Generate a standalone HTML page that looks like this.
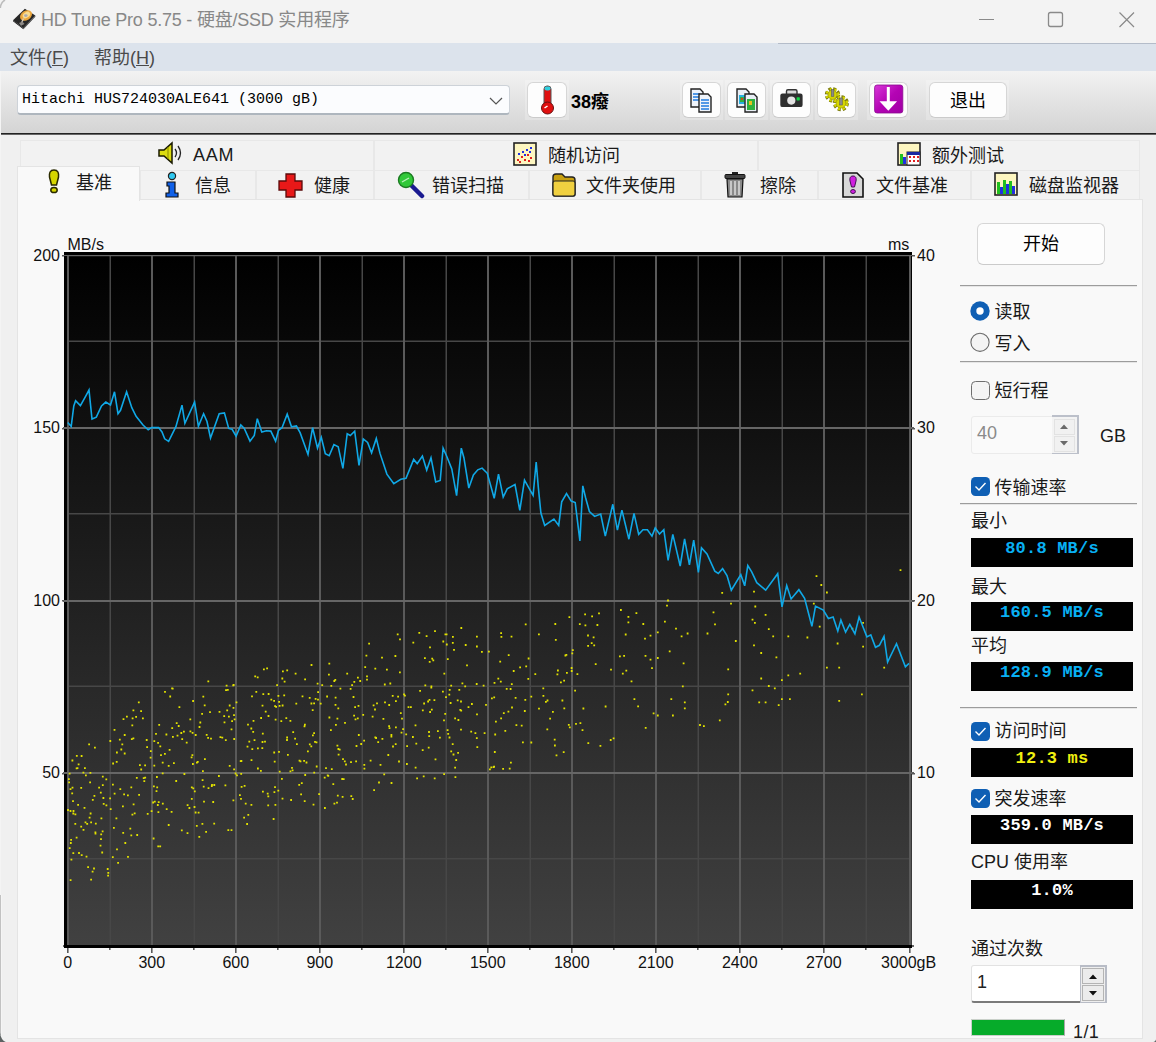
<!DOCTYPE html>
<html lang="zh"><head><meta charset="utf-8"><title>HD Tune Pro</title><style>
html,body{margin:0;padding:0}
body{width:1156px;height:1042px;position:relative;overflow:hidden;background:#f0f0f0;
 font-family:"Liberation Sans","Noto Sans CJK SC",sans-serif;font-size:18px;color:#000;line-height:1}
div,span,svg{position:absolute;box-sizing:border-box}
.t{white-space:nowrap;line-height:20px;height:20px}
.lbl{white-space:nowrap;font-size:18px;line-height:22px;height:22px;color:#1a1a1a}

.ax{white-space:nowrap;font-size:16px;line-height:16px;height:16px;color:#111;font-family:"Liberation Sans",sans-serif}
.btn{background:#fdfdfd;border:1px solid #d6d6d6;border-bottom-color:#cbcbcb;border-radius:6px}
.bb{background:#000;left:971px;width:162px;height:29px}
.bb span{left:0;width:162px;text-align:center;top:2px;font-family:"Liberation Mono","Noto Sans CJK SC",monospace;font-weight:bold;font-size:17px;line-height:18px;height:18px;white-space:nowrap;letter-spacing:0.2px}
.sep{left:960px;width:177px;height:2px;border-top:1px solid #9c9c9c;border-bottom:1px solid #e6e6e6}
.cb{width:20px;height:20px;left:970px;border-radius:4.5px;margin-top:-0.5px}
.cb.on{background:#0f5fb4}
.cb.off{background:#f4f4f4;border:1px solid #6e6e6e}
.tab{top:170px;height:30px;border:1px solid #e8e8e8;border-bottom:none;background:#f2f2f2}
.tab1{top:140px;height:30px;border:1px solid #e8e8e8;border-bottom:none;background:#f2f2f2}
.mono{font-family:"Liberation Mono","Noto Sans CJK SC",monospace}
.tt{white-space:nowrap;font-size:18px;line-height:22px;height:22px;color:#1a1a1a}
</style></head><body>
<div style="left:0px;top:0px;width:1156px;height:43px;background:#f3f3f3"></div>
<svg style="left:11px;top:7px" width="26" height="24" viewBox="0 0 26 24">
<polygon points="2,13.200 13.900,1.800 24.300,8.600 12.400,21.200" fill="#272727"/>
<polygon points="2,13.200 12.400,21.200 12.400,22.300 2,14.300" fill="#101010"/>
<polygon points="12.400,21.200 24.300,8.600 24.300,9.700 12.400,22.300" fill="#3c3c3c"/>
<ellipse cx="15" cy="8.500" rx="6.500" ry="4.700" fill="#eaa53c" transform="rotate(-33 15 8.500)"/>
<ellipse cx="15.400" cy="8" rx="4" ry="2.800" fill="#f9dc90" transform="rotate(-33 15.400 8)"/>
<ellipse cx="14.800" cy="8.600" rx="1.800" ry="1.400" fill="#a9a9b2"/>
<path d="M12.500 11.500 L10.500 16" stroke="#d8d0c4" stroke-width="1.300"/>
<polygon points="8,16 11.500,14.500 13.500,17 10,18.800" fill="#8e8a86"/>
</svg>
<svg style="left:0;top:0" width="8" height="10" viewBox="0 0 8 10"><path d="M0.300 8 Q0.600 2.500 5 0" stroke="#bcbcbc" stroke-width="1.600" fill="none"/></svg>
<span class="t" style="left:41px;top:9px;font-size:18px;color:#888;line-height:22px;height:22px;letter-spacing:-0.22px">HD Tune Pro 5.75 - 硬盘/SSD 实用程序</span>
<svg style="left:960px;top:0" width="196" height="43" viewBox="0 0 196 43">
<path d="M19 19.5 H34" stroke="#8a8a8a" stroke-width="1" fill="none"/>
<rect x="88.5" y="12.5" width="14" height="14" rx="2" stroke="#8a8a8a" stroke-width="1.3" fill="none"/>
<path d="M159.5 12.5 L174 27 M174 12.5 L159.5 27" stroke="#8a8a8a" stroke-width="1.2" fill="none"/>
</svg>
<div style="left:0px;top:43px;width:1156px;height:28.5px;background:#dce3ec"></div>
<div style="left:778px;top:43px;width:378px;height:1px;background:#b4bcc9"></div>
<span class="t" style="left:10px;top:47px;font-size:18px;color:#4a4a4a;line-height:22px;height:22px">文件(<u>F</u>)</span>
<span class="t" style="left:94px;top:47px;font-size:18px;color:#4a4a4a;line-height:22px;height:22px">帮助(<u>H</u>)</span>
<div style="left:0px;top:71px;width:1156px;height:62px;background:linear-gradient(#f2f2f2,#d4d4d4)"></div>
<div style="left:0px;top:133px;width:1156px;height:1px;background:#222"></div>
<div style="left:0px;top:134px;width:1156px;height:1px;background:#666"></div>
<div style="left:17px;top:85px;width:493px;height:30px;background:#fbfcfe;border:1px solid #cdd2d8;border-bottom:2px solid #aeb6be;border-radius:4px"></div>
<span class="t mono" style="left:22px;top:91px;font-size:15px;line-height:18px;height:18px;color:#000">Hitachi HUS724030ALE641 (3000 gB)</span>
<svg style="left:488px;top:96px" width="16" height="10" viewBox="0 0 16 10"><path d="M2 2 L8 8 L14 2" stroke="#555" stroke-width="1.2" fill="none"/></svg>
<div style="left:525px;top:80px;width:43.5px;height:40px;background:rgba(255,255,255,0.22)"></div>
<div class="btn" style="left:527px;top:82px;width:39.5px;height:35.5px;"></div>
<svg style="left:536px;top:84px" width="22" height="33" viewBox="0 0 22 33">
<rect x="8" y="2" width="7" height="20" rx="3" fill="#e01010" stroke="#555" stroke-width="1"/>
<rect x="8.5" y="2.5" width="6" height="4" rx="2" fill="#30d0e0"/>
<circle cx="11.5" cy="24" r="6" fill="#e01010" stroke="#661111" stroke-width="1"/>
<path d="M8.5 24 l3 -2" stroke="#fff" stroke-width="1.5"/>
</svg>
<span class="t" style="left:571px;top:91px;font-size:18px;font-weight:bold;line-height:22px;height:22px;color:#000">38癈</span>
<div style="left:679.5px;top:80px;width:43px;height:40px;background:rgba(255,255,255,0.22)"></div>
<div class="btn" style="left:681.5px;top:82px;width:39px;height:35.5px;"></div>
<div style="left:724.5px;top:80px;width:43px;height:40px;background:rgba(255,255,255,0.22)"></div>
<div class="btn" style="left:726.5px;top:82px;width:39px;height:35.5px;"></div>
<div style="left:770px;top:80px;width:43px;height:40px;background:rgba(255,255,255,0.22)"></div>
<div class="btn" style="left:772px;top:82px;width:39px;height:35.5px;"></div>
<div style="left:815px;top:80px;width:43px;height:40px;background:rgba(255,255,255,0.22)"></div>
<div class="btn" style="left:817px;top:82px;width:39px;height:35.5px;"></div>
<div style="left:867px;top:80px;width:43px;height:40px;background:rgba(255,255,255,0.22)"></div>
<div class="btn" style="left:869px;top:82px;width:39px;height:35.5px;"></div>
<svg style="left:689px;top:87px" width="26" height="28" viewBox="0 0 26 28">
<path d="M2 2 h9 l3 3 v15 h-12 z" fill="#eef3fa" stroke="#222" stroke-width="1.4"/>
<path d="M4 7h7M4 10h7M4 13h7" stroke="#1e7be0" stroke-width="1.6"/>
<path d="M10 7 h9 l3 3 v15 h-12 z" fill="#eef3fa" stroke="#222" stroke-width="1.4"/>
<path d="M12 13h8M12 16h8M12 19h8M12 22h8" stroke="#1e7be0" stroke-width="1.6"/>
</svg>
<svg style="left:735px;top:87px" width="26" height="28" viewBox="0 0 26 28">
<path d="M2 2 h9 l3 3 v15 h-12 z" fill="#e8eef5" stroke="#222" stroke-width="1.4"/>
<rect x="4" y="8" width="7" height="9" fill="#28b0e0"/>
<path d="M10 7 h9 l3 3 v15 h-12 z" fill="#e8eef5" stroke="#222" stroke-width="1.4"/>
<rect x="12" y="12" width="8" height="11" fill="#30b040"/><rect x="14" y="14" width="3" height="4" fill="#e8c020"/>
<rect x="5" y="10" width="4" height="5" fill="#30b040"/><rect x="6" y="11" width="2" height="2" fill="#d04020"/>
</svg>
<svg style="left:779px;top:88px" width="26" height="22" viewBox="0 0 26 22">
<rect x="7.5" y="1.8" width="10.5" height="6" rx="1.5" fill="#d8d8d8" stroke="#333" stroke-width="1.4"/>
<rect x="1.3" y="5.5" width="22.3" height="13.6" rx="2.2" fill="#2e2e2e"/>
<circle cx="12.3" cy="12.6" r="4.1" fill="#e4e4e4"/>
<rect x="17.6" y="9.2" width="3.2" height="3.2" rx="0.6" fill="#10d844"/>
</svg>
<svg style="left:824px;top:86px" width="28" height="28" viewBox="0 0 28 28">
<g fill="none">
<circle cx="8.5" cy="8.8" r="5.6" stroke="#77770a" stroke-width="4.2" stroke-dasharray="2.6 1.8"/>
<circle cx="8.5" cy="8.8" r="5.4" stroke="#d6d600" stroke-width="3" stroke-dasharray="2.2 2.2" stroke-dashoffset="-0.2"/>
<circle cx="8.5" cy="8.8" r="4.6" fill="#d6d600" stroke="#8a8a10" stroke-width="0.6"/>
<circle cx="16.9" cy="17.2" r="5.9" stroke="#77770a" stroke-width="4.2" stroke-dasharray="2.7 1.9"/>
<circle cx="16.9" cy="17.2" r="5.7" stroke="#d6d600" stroke-width="3" stroke-dasharray="2.3 2.3" stroke-dashoffset="-0.2"/>
<circle cx="16.9" cy="17.2" r="4.9" fill="#d6d600" stroke="#8a8a10" stroke-width="0.6"/>
</g>
<rect x="7.3" y="3.5" width="2.6" height="7" fill="#8a8a8a" stroke="#555" stroke-width="0.5"/><rect x="15.7" y="12" width="2.6" height="7" fill="#8a8a8a" stroke="#555" stroke-width="0.5"/>
</svg>
<svg style="left:873px;top:84px" width="32" height="31" viewBox="0 0 32 31">
<defs><linearGradient id="pg" x1="0" y1="0" x2="1" y2="1"><stop offset="0" stop-color="#d838d8"/><stop offset="0.5" stop-color="#b404b4"/><stop offset="1" stop-color="#a000a4"/></linearGradient></defs>
<rect x="1.6" y="1" width="28.2" height="28" rx="2.5" fill="url(#pg)" stroke="#8a0a90" stroke-width="0.8"/>
<path d="M15.300 3 V20" stroke="#fff" stroke-width="3" fill="none"/><path d="M6.500 17.200 H24.100 L15.300 26.800z" fill="#fff"/>
</svg>
<div style="left:926px;top:80px;width:83px;height:40px;background:rgba(255,255,255,0.22)"></div>
<div class="btn" style="left:928.5px;top:82px;width:78px;height:35.5px;"></div>
<span class="lbl" style="left:950px;top:90px;color:#000">退出</span>
<div class="tab1" style="left:20px;top:140px;width:354px;height:30px;"></div>
<div class="tab1" style="left:374px;top:140px;width:384px;height:30px;"></div>
<div class="tab1" style="left:758px;top:140px;width:382px;height:30px;"></div>
<div class="tab" style="left:140px;top:170px;width:116px;height:30px;"></div>
<div class="tab" style="left:256px;top:170px;width:118px;height:30px;"></div>
<div class="tab" style="left:374px;top:170px;width:155px;height:30px;"></div>
<div class="tab" style="left:529px;top:170px;width:172px;height:30px;"></div>
<div class="tab" style="left:701px;top:170px;width:117px;height:30px;"></div>
<div class="tab" style="left:818px;top:170px;width:153px;height:30px;"></div>
<div class="tab" style="left:971px;top:170px;width:169px;height:30px;"></div>
<div style="left:17px;top:199px;width:1126px;height:840px;background:#f9f9f9;border:1px solid #e4e4e4"></div>
<div style="left:17px;top:166px;width:123px;height:35px;background:#f9f9f9;border:1px solid #e4e4e4;border-bottom:none"></div>
<svg style="left:156px;top:141px" width="30" height="24" viewBox="0 0 30 24"><path d="M3 9 h5 l8 -7 v20 l-8 -7 h-5z" fill="#dcdc10" stroke="#1a1a00" stroke-width="1.5"/>
<path d="M12 6 v12" stroke="#8a8a00" stroke-width="1"/>
<path d="M19 8 q3 4 0 8 M22 5 q5 7 0 14" stroke="#222" stroke-width="1.3" fill="none"/></svg>
<span class="tt" style="left:193px;top:144px;letter-spacing:0.8px">AAM</span>
<svg style="left:513px;top:142px" width="25" height="25" viewBox="0 0 25 25"><rect x="1" y="1" width="22" height="22" fill="#fdf6c0" stroke="#222" stroke-width="1.6"/>
<g fill="#e02020"><rect x="4" y="17" width="2" height="2"/><rect x="8" y="14" width="2" height="2"/><rect x="11" y="17" width="2" height="2"/><rect x="14" y="12" width="2" height="2"/><rect x="17" y="15" width="2" height="2"/><rect x="6" y="19" width="2" height="2"/><rect x="15" y="18" width="2" height="2"/></g>
<g fill="#2030e0"><rect x="5" y="11" width="2" height="2"/><rect x="9" y="9" width="2" height="2"/><rect x="13" y="7" width="2" height="2"/><rect x="17" y="5" width="2" height="2"/><rect x="16" y="9" width="2" height="2"/><rect x="11" y="12" width="2" height="2"/></g></svg>
<span class="tt" style="left:548px;top:145px;">随机访问</span>
<svg style="left:897px;top:142px" width="25" height="25" viewBox="0 0 25 25"><rect x="1" y="1" width="22" height="22" fill="#fdf6c0" stroke="#222" stroke-width="1.6"/>
<rect x="3" y="12" width="3" height="10" fill="#20c020"/><rect x="6" y="15" width="3" height="7" fill="#2030e0"/>
<rect x="10" y="10" width="13" height="13" fill="#fff" stroke="#222" stroke-width="1"/><rect x="10" y="10" width="13" height="3" fill="#1a2aa0"/>
<g fill="#e02020"><rect x="12" y="14" width="2" height="2"/><rect x="16" y="14" width="2" height="2"/><rect x="20" y="14" width="2" height="2"/><rect x="12" y="18" width="2" height="2"/><rect x="16" y="18" width="2" height="2"/><rect x="20" y="18" width="2" height="2"/></g></svg>
<span class="tt" style="left:932px;top:145px;">额外测试</span>
<svg style="left:46px;top:168px" width="16" height="26" viewBox="0 0 16 26"><path d="M8 2 c4 0 5 3 4.5 7 l-2 8 h-5 l-2 -8 c-.5 -4 .5 -7 4.500 -7z" fill="#d6d600" stroke="#2a2a00" stroke-width="1.5"/>
<ellipse cx="8" cy="22" rx="3.2" ry="2.6" fill="#d6d600" stroke="#2a2a00" stroke-width="1.5"/></svg>
<span class="tt" style="left:76px;top:172px;">基准</span>
<svg style="left:163px;top:171px" width="18" height="28" viewBox="0 0 18 28"><circle cx="9" cy="5" r="3.6" fill="#30c8f0" stroke="#222" stroke-width="1.2"/>
<path d="M4 11 h8 v11 h3 v4 h-12 v-4 h3 v-7 h-2z" fill="#1060e8" stroke="#111" stroke-width="1.2"/></svg>
<span class="tt" style="left:195px;top:175px;">信息</span>
<svg style="left:277px;top:172px" width="28" height="27" viewBox="0 0 28 27"><path d="M9 2 h9 v7 h7 v9 h-7 v7 h-9 v-7 h-7 v-9 h7z" fill="#e81818" stroke="#5a0a0a" stroke-width="1.3"/></svg>
<span class="tt" style="left:314px;top:175px;">健康</span>
<svg style="left:396px;top:171px" width="30" height="28" viewBox="0 0 30 28"><path d="M15 14 L26 25" stroke="#1a1a90" stroke-width="4.5" stroke-linecap="round"/>
<circle cx="10" cy="9" r="7.5" fill="#30c838" stroke="#1a7a20" stroke-width="1.4"/>
<path d="M6 11 l7 -4" stroke="#b8f0b8" stroke-width="1.4"/></svg>
<span class="tt" style="left:432px;top:175px;">错误扫描</span>
<svg style="left:551px;top:171px" width="26" height="27" viewBox="0 0 26 27"><path d="M2 6 q0 -3 3 -3 h6 l3 3 h7 q3 0 3 3 v14 q0 2 -2 2 h-18 q-2 0 -2 -2z" fill="#c8a010" stroke="#222" stroke-width="1.4"/>
<path d="M4 10 h18 q2 0 2 2 v11 q0 2 -2 2 h-18 q-2 0 -2 -2 v-11 q0 -2 2 -2z" fill="#f0d040" stroke="#222" stroke-width="1.2"/></svg>
<span class="tt" style="left:586px;top:175px;">文件夹使用</span>
<svg style="left:723px;top:171px" width="24" height="28" viewBox="0 0 24 28"><rect x="9" y="1" width="6" height="3" fill="#222"/><rect x="2" y="3.500" width="20" height="4" rx="1" fill="#444" stroke="#111" stroke-width="1"/>
<path d="M4 8 h16 l-1 18 h-14z" fill="#8a8a8a" stroke="#111" stroke-width="1.2"/>
<path d="M8 10 v14 M12 10 v14 M16 10 v14" stroke="#d8d8d8" stroke-width="1.6"/></svg>
<span class="tt" style="left:760px;top:175px;">擦除</span>
<svg style="left:841px;top:171px" width="24" height="28" viewBox="0 0 24 28"><path d="M2 2 h14 l6 6 v18 h-20z" fill="#d8d8d8" stroke="#111" stroke-width="1.6"/>
<path d="M12 5 c3 0 3.500 2.500 3 5 l-1.500 6 h-3 l-1.500 -6 c-.5 -2.500 0 -5 3 -5z" fill="#d020e0" stroke="#401050" stroke-width="1"/>
<ellipse cx="12" cy="20.500" rx="2.400" ry="2" fill="#d020e0" stroke="#401050" stroke-width="1"/></svg>
<span class="tt" style="left:876px;top:175px;">文件基准</span>
<svg style="left:994px;top:172px" width="26" height="26" viewBox="0 0 26 26"><rect x="1" y="1" width="22" height="22" fill="#fdf6c0" stroke="#222" stroke-width="1.6"/>
<rect x="3" y="10" width="3" height="12" fill="#20c020"/><rect x="6" y="15" width="3" height="7" fill="#2030e0"/>
<rect x="9" y="8" width="3" height="14" fill="#20c020"/><rect x="12" y="12" width="3" height="10" fill="#2030e0"/>
<rect x="15" y="9" width="3" height="13" fill="#20c020"/><rect x="18" y="14" width="3" height="8" fill="#2030e0"/></svg>
<span class="tt" style="left:1029px;top:175px;">磁盘监视器</span>
<svg style="left:0;top:0" width="1156" height="1042" viewBox="0 0 1156 1042"><defs><linearGradient id="cg" x1="0" y1="0" x2="0" y2="1"><stop offset="0" stop-color="#000"/><stop offset="1" stop-color="#414141"/></linearGradient></defs><rect x="64" y="252" width="848" height="696" fill="#000"/><rect x="67" y="255" width="845" height="690" fill="url(#cg)"/><path d="M109.5 255h1.5V945h-1.5zM193.5 255h1.5V945h-1.5zM277.5 255h1.5V945h-1.5zM361.5 255h1.5V945h-1.5zM445.5 255h1.5V945h-1.5zM529.5 255h1.5V945h-1.5zM613.5 255h1.5V945h-1.5zM697.5 255h1.5V945h-1.5zM781.5 255h1.5V945h-1.5zM865.5 255h1.5V945h-1.5zM67 340.5H911v1.5H67zM67 513.0H911v1.5H67zM67 685.5H911v1.5H67zM67 858.0H911v1.5H67z" fill="#474747"/><path d="M67 256H911v1H67z" fill="#808080" fill-opacity="0.18" shape-rendering="crispEdges"/><path d="M67 255h2V945h-2zM151 255h2V945h-2zM235 255h2V945h-2zM319 255h2V945h-2zM403 255h2V945h-2zM487 255h2V945h-2zM571 255h2V945h-2zM655 255h2V945h-2zM739 255h2V945h-2zM823 255h2V945h-2zM909 255h2V945h-2z" fill="#5a5a5a" shape-rendering="crispEdges"/><path d="M63 255H914v1H63zM63 427H914v2H63zM63 600H914v2H63zM63 772H914v2H63zM63 945H914v2H63z" fill="#666" shape-rendering="crispEdges"/><path d="M62 255h2v1.5h-2zM912 255h3v1.5h-3zM62 428h2v1.5h-2zM912 428h3v1.5h-3zM62 600h2v1.5h-2zM912 600h3v1.5h-3zM62 773h2v1.5h-2zM912 773h3v1.5h-3zM67 948h1.6v5h-1.6zM109 948h1.6v2h-1.6zM151 948h1.6v5h-1.6zM193 948h1.6v2h-1.6zM235 948h1.6v5h-1.6zM277 948h1.6v2h-1.6zM319 948h1.6v5h-1.6zM361 948h1.6v2h-1.6zM403 948h1.6v5h-1.6zM445 948h1.6v2h-1.6zM487 948h1.6v5h-1.6zM529 948h1.6v2h-1.6zM571 948h1.6v5h-1.6zM613 948h1.6v2h-1.6zM655 948h1.6v5h-1.6zM697 948h1.6v2h-1.6zM739 948h1.6v5h-1.6zM781 948h1.6v2h-1.6zM823 948h1.6v5h-1.6zM865 948h1.6v2h-1.6zM909 948h1.6v5h-1.6z" fill="#5a5a5a"/><rect x="64" y="945" width="848" height="3" fill="#000"/><path d="M80.7 755.1h1.8v1.8h-1.8zM89.7 812.6h1.8v1.8h-1.8zM68.7 772.7h1.8v1.8h-1.8zM85.0 774.4h1.8v1.8h-1.8zM93.5 795.0h1.8v1.8h-1.8zM75.7 767.4h1.8v1.8h-1.8zM72.1 800.2h1.8v1.8h-1.8zM94.0 746.7h1.8v1.8h-1.8zM69.6 810.1h1.8v1.8h-1.8zM80.3 786.9h1.8v1.8h-1.8zM100.5 817.4h1.8v1.8h-1.8zM89.2 781.5h1.8v1.8h-1.8zM71.3 792.5h1.8v1.8h-1.8zM68.8 847.2h1.8v1.8h-1.8zM80.3 825.8h1.8v1.8h-1.8zM86.3 822.9h1.8v1.8h-1.8zM69.7 879.2h1.8v1.8h-1.8zM101.7 830.5h1.8v1.8h-1.8zM68.0 778.2h1.8v1.8h-1.8zM69.6 788.2h1.8v1.8h-1.8zM83.6 807.0h1.8v1.8h-1.8zM90.2 821.5h1.8v1.8h-1.8zM84.6 821.5h1.8v1.8h-1.8zM74.5 813.4h1.8v1.8h-1.8zM91.9 799.0h1.8v1.8h-1.8zM82.6 829.0h1.8v1.8h-1.8zM93.1 867.6h1.8v1.8h-1.8zM99.9 791.7h1.8v1.8h-1.8zM71.5 759.6h1.8v1.8h-1.8zM75.9 755.0h1.8v1.8h-1.8zM67.1 809.1h1.8v1.8h-1.8zM68.2 781.4h1.8v1.8h-1.8zM77.7 763.5h1.8v1.8h-1.8zM102.8 803.0h1.8v1.8h-1.8zM70.5 858.7h1.8v1.8h-1.8zM76.6 767.3h1.8v1.8h-1.8zM72.4 852.3h1.8v1.8h-1.8zM78.1 852.1h1.8v1.8h-1.8zM89.5 772.0h1.8v1.8h-1.8zM101.3 851.6h1.8v1.8h-1.8zM98.2 786.8h1.8v1.8h-1.8zM69.9 842.1h1.8v1.8h-1.8zM107.4 872.0h1.8v1.8h-1.8zM82.5 771.8h1.8v1.8h-1.8zM75.7 836.7h1.8v1.8h-1.8zM94.6 832.6h1.8v1.8h-1.8zM105.4 778.4h1.8v1.8h-1.8zM100.3 833.4h1.8v1.8h-1.8zM84.0 767.3h1.8v1.8h-1.8zM72.4 812.6h1.8v1.8h-1.8zM101.9 784.2h1.8v1.8h-1.8zM90.2 878.7h1.8v1.8h-1.8zM94.5 831.5h1.8v1.8h-1.8zM101.9 775.8h1.8v1.8h-1.8zM77.2 804.0h1.8v1.8h-1.8zM72.6 810.1h1.8v1.8h-1.8zM91.7 870.7h1.8v1.8h-1.8zM88.2 743.5h1.8v1.8h-1.8zM85.6 855.8h1.8v1.8h-1.8zM74.4 822.9h1.8v1.8h-1.8zM80.8 854.2h1.8v1.8h-1.8zM71.6 786.8h1.8v1.8h-1.8zM99.6 844.8h1.8v1.8h-1.8zM105.5 804.4h1.8v1.8h-1.8zM88.7 816.8h1.8v1.8h-1.8zM87.2 866.2h1.8v1.8h-1.8zM106.8 868.1h1.8v1.8h-1.8zM102.5 797.1h1.8v1.8h-1.8zM70.2 839.0h1.8v1.8h-1.8zM100.1 838.2h1.8v1.8h-1.8zM94.9 822.8h1.8v1.8h-1.8zM107.2 874.8h1.8v1.8h-1.8zM144.2 764.5h1.8v1.8h-1.8zM130.9 738.3h1.8v1.8h-1.8zM122.6 718.2h1.8v1.8h-1.8zM132.5 709.4h1.8v1.8h-1.8zM123.2 793.4h1.8v1.8h-1.8zM111.9 856.3h1.8v1.8h-1.8zM113.6 729.0h1.8v1.8h-1.8zM142.0 717.4h1.8v1.8h-1.8zM127.0 794.4h1.8v1.8h-1.8zM115.5 817.5h1.8v1.8h-1.8zM113.0 827.0h1.8v1.8h-1.8zM127.1 855.9h1.8v1.8h-1.8zM135.9 776.9h1.8v1.8h-1.8zM112.0 783.8h1.8v1.8h-1.8zM132.5 737.4h1.8v1.8h-1.8zM131.4 724.5h1.8v1.8h-1.8zM116.0 751.6h1.8v1.8h-1.8zM122.3 831.9h1.8v1.8h-1.8zM121.4 743.5h1.8v1.8h-1.8zM123.8 752.6h1.8v1.8h-1.8zM109.8 808.3h1.8v1.8h-1.8zM117.2 862.0h1.8v1.8h-1.8zM113.7 792.8h1.8v1.8h-1.8zM144.3 776.7h1.8v1.8h-1.8zM138.2 793.9h1.8v1.8h-1.8zM139.0 764.3h1.8v1.8h-1.8zM123.8 734.1h1.8v1.8h-1.8zM112.2 762.6h1.8v1.8h-1.8zM116.1 848.4h1.8v1.8h-1.8zM145.8 739.1h1.8v1.8h-1.8zM119.4 788.3h1.8v1.8h-1.8zM115.8 761.0h1.8v1.8h-1.8zM149.7 756.8h1.8v1.8h-1.8zM149.9 750.3h1.8v1.8h-1.8zM109.2 797.4h1.8v1.8h-1.8zM130.4 786.5h1.8v1.8h-1.8zM109.4 740.1h1.8v1.8h-1.8zM126.0 715.7h1.8v1.8h-1.8zM122.0 805.5h1.8v1.8h-1.8zM131.5 813.8h1.8v1.8h-1.8zM146.2 746.3h1.8v1.8h-1.8zM150.7 810.2h1.8v1.8h-1.8zM136.3 834.1h1.8v1.8h-1.8zM146.8 813.0h1.8v1.8h-1.8zM143.4 780.2h1.8v1.8h-1.8zM130.4 834.5h1.8v1.8h-1.8zM133.8 812.4h1.8v1.8h-1.8zM118.9 738.8h1.8v1.8h-1.8zM124.4 842.1h1.8v1.8h-1.8zM132.7 803.5h1.8v1.8h-1.8zM137.9 701.5h1.8v1.8h-1.8zM142.8 777.2h1.8v1.8h-1.8zM131.7 717.5h1.8v1.8h-1.8zM140.2 710.3h1.8v1.8h-1.8zM120.4 748.6h1.8v1.8h-1.8zM140.3 768.6h1.8v1.8h-1.8zM129.4 827.8h1.8v1.8h-1.8zM135.2 716.0h1.8v1.8h-1.8zM157.5 811.3h1.8v1.8h-1.8zM164.1 690.9h1.8v1.8h-1.8zM153.9 800.8h1.8v1.8h-1.8zM180.4 732.1h1.8v1.8h-1.8zM173.0 762.2h1.8v1.8h-1.8zM156.3 786.5h1.8v1.8h-1.8zM190.7 756.4h1.8v1.8h-1.8zM185.8 741.7h1.8v1.8h-1.8zM160.1 754.2h1.8v1.8h-1.8zM157.3 845.5h1.8v1.8h-1.8zM156.9 804.1h1.8v1.8h-1.8zM180.9 829.4h1.8v1.8h-1.8zM171.8 687.8h1.8v1.8h-1.8zM172.0 735.9h1.8v1.8h-1.8zM157.2 741.9h1.8v1.8h-1.8zM186.7 804.2h1.8v1.8h-1.8zM186.6 832.3h1.8v1.8h-1.8zM181.3 738.3h1.8v1.8h-1.8zM167.8 764.9h1.8v1.8h-1.8zM169.3 695.6h1.8v1.8h-1.8zM155.6 790.3h1.8v1.8h-1.8zM161.8 772.4h1.8v1.8h-1.8zM159.3 845.4h1.8v1.8h-1.8zM188.5 807.1h1.8v1.8h-1.8zM190.9 798.0h1.8v1.8h-1.8zM153.4 764.8h1.8v1.8h-1.8zM183.0 730.7h1.8v1.8h-1.8zM153.4 740.2h1.8v1.8h-1.8zM165.8 808.3h1.8v1.8h-1.8zM192.4 787.4h1.8v1.8h-1.8zM164.0 752.9h1.8v1.8h-1.8zM158.3 724.0h1.8v1.8h-1.8zM189.4 718.5h1.8v1.8h-1.8zM189.5 730.5h1.8v1.8h-1.8zM159.4 745.5h1.8v1.8h-1.8zM155.1 733.0h1.8v1.8h-1.8zM175.3 780.1h1.8v1.8h-1.8zM168.7 748.9h1.8v1.8h-1.8zM165.5 733.6h1.8v1.8h-1.8zM192.0 763.1h1.8v1.8h-1.8zM177.8 725.1h1.8v1.8h-1.8zM161.8 761.8h1.8v1.8h-1.8zM191.5 754.3h1.8v1.8h-1.8zM152.7 837.6h1.8v1.8h-1.8zM171.2 687.4h1.8v1.8h-1.8zM167.8 824.1h1.8v1.8h-1.8zM192.2 700.1h1.8v1.8h-1.8zM157.8 801.3h1.8v1.8h-1.8zM190.9 786.4h1.8v1.8h-1.8zM183.5 773.1h1.8v1.8h-1.8zM153.0 785.4h1.8v1.8h-1.8zM178.5 706.3h1.8v1.8h-1.8zM161.9 802.8h1.8v1.8h-1.8zM156.0 776.1h1.8v1.8h-1.8zM175.8 722.3h1.8v1.8h-1.8zM176.6 734.7h1.8v1.8h-1.8zM170.7 810.9h1.8v1.8h-1.8zM171.3 727.2h1.8v1.8h-1.8zM191.7 731.9h1.8v1.8h-1.8zM152.2 801.6h1.8v1.8h-1.8zM211.1 784.1h1.8v1.8h-1.8zM232.3 684.4h1.8v1.8h-1.8zM207.6 787.3h1.8v1.8h-1.8zM201.7 779.3h1.8v1.8h-1.8zM202.0 770.3h1.8v1.8h-1.8zM203.1 800.8h1.8v1.8h-1.8zM205.8 733.9h1.8v1.8h-1.8zM202.8 785.8h1.8v1.8h-1.8zM233.3 738.1h1.8v1.8h-1.8zM202.4 695.8h1.8v1.8h-1.8zM195.9 824.9h1.8v1.8h-1.8zM230.6 829.2h1.8v1.8h-1.8zM232.6 707.0h1.8v1.8h-1.8zM232.8 684.1h1.8v1.8h-1.8zM221.4 736.8h1.8v1.8h-1.8zM207.4 680.5h1.8v1.8h-1.8zM205.2 831.0h1.8v1.8h-1.8zM198.6 726.1h1.8v1.8h-1.8zM228.0 715.8h1.8v1.8h-1.8zM213.3 822.8h1.8v1.8h-1.8zM201.5 823.0h1.8v1.8h-1.8zM194.7 811.6h1.8v1.8h-1.8zM225.7 684.8h1.8v1.8h-1.8zM196.0 761.8h1.8v1.8h-1.8zM231.2 720.2h1.8v1.8h-1.8zM233.7 718.4h1.8v1.8h-1.8zM223.6 721.5h1.8v1.8h-1.8zM193.6 806.1h1.8v1.8h-1.8zM233.1 714.2h1.8v1.8h-1.8zM213.4 784.1h1.8v1.8h-1.8zM204.0 758.3h1.8v1.8h-1.8zM232.5 799.4h1.8v1.8h-1.8zM224.5 784.5h1.8v1.8h-1.8zM207.2 737.0h1.8v1.8h-1.8zM226.3 709.4h1.8v1.8h-1.8zM225.1 689.3h1.8v1.8h-1.8zM194.8 734.1h1.8v1.8h-1.8zM234.7 772.6h1.8v1.8h-1.8zM196.9 761.0h1.8v1.8h-1.8zM223.3 715.3h1.8v1.8h-1.8zM210.9 785.2h1.8v1.8h-1.8zM224.9 739.2h1.8v1.8h-1.8zM228.8 764.9h1.8v1.8h-1.8zM209.1 711.2h1.8v1.8h-1.8zM203.8 704.4h1.8v1.8h-1.8zM230.6 728.4h1.8v1.8h-1.8zM210.1 737.7h1.8v1.8h-1.8zM227.4 829.3h1.8v1.8h-1.8zM197.7 811.8h1.8v1.8h-1.8zM228.8 704.6h1.8v1.8h-1.8zM198.4 836.0h1.8v1.8h-1.8zM218.0 775.1h1.8v1.8h-1.8zM212.3 801.1h1.8v1.8h-1.8zM233.2 768.4h1.8v1.8h-1.8zM219.5 736.3h1.8v1.8h-1.8zM199.4 721.6h1.8v1.8h-1.8zM218.6 711.0h1.8v1.8h-1.8zM193.9 790.5h1.8v1.8h-1.8zM201.2 713.0h1.8v1.8h-1.8zM226.9 689.0h1.8v1.8h-1.8zM239.8 760.3h1.8v1.8h-1.8zM262.4 693.3h1.8v1.8h-1.8zM264.8 710.7h1.8v1.8h-1.8zM248.4 740.7h1.8v1.8h-1.8zM250.5 804.0h1.8v1.8h-1.8zM277.5 694.9h1.8v1.8h-1.8zM266.2 667.4h1.8v1.8h-1.8zM273.5 791.3h1.8v1.8h-1.8zM252.6 719.9h1.8v1.8h-1.8zM236.1 774.4h1.8v1.8h-1.8zM273.8 760.7h1.8v1.8h-1.8zM251.1 695.5h1.8v1.8h-1.8zM247.4 814.0h1.8v1.8h-1.8zM240.1 798.0h1.8v1.8h-1.8zM276.2 684.2h1.8v1.8h-1.8zM275.2 706.0h1.8v1.8h-1.8zM274.5 804.0h1.8v1.8h-1.8zM261.6 741.1h1.8v1.8h-1.8zM244.8 802.8h1.8v1.8h-1.8zM270.4 698.8h1.8v1.8h-1.8zM252.3 730.9h1.8v1.8h-1.8zM240.7 785.9h1.8v1.8h-1.8zM273.3 751.6h1.8v1.8h-1.8zM267.4 795.4h1.8v1.8h-1.8zM240.5 760.1h1.8v1.8h-1.8zM261.9 732.8h1.8v1.8h-1.8zM260.0 770.0h1.8v1.8h-1.8zM254.3 675.5h1.8v1.8h-1.8zM261.6 704.7h1.8v1.8h-1.8zM267.6 715.1h1.8v1.8h-1.8zM255.4 691.0h1.8v1.8h-1.8zM253.6 739.2h1.8v1.8h-1.8zM257.0 767.6h1.8v1.8h-1.8zM239.0 794.3h1.8v1.8h-1.8zM257.0 747.4h1.8v1.8h-1.8zM251.4 748.3h1.8v1.8h-1.8zM277.4 789.7h1.8v1.8h-1.8zM243.7 785.0h1.8v1.8h-1.8zM274.1 786.2h1.8v1.8h-1.8zM274.7 718.8h1.8v1.8h-1.8zM267.3 804.4h1.8v1.8h-1.8zM247.1 723.8h1.8v1.8h-1.8zM274.2 705.3h1.8v1.8h-1.8zM256.8 676.4h1.8v1.8h-1.8zM243.2 816.7h1.8v1.8h-1.8zM264.1 740.7h1.8v1.8h-1.8zM240.3 772.9h1.8v1.8h-1.8zM250.6 759.2h1.8v1.8h-1.8zM272.7 818.1h1.8v1.8h-1.8zM262.0 790.7h1.8v1.8h-1.8zM246.6 745.8h1.8v1.8h-1.8zM267.7 693.1h1.8v1.8h-1.8zM266.8 792.7h1.8v1.8h-1.8zM246.2 823.1h1.8v1.8h-1.8zM260.2 717.1h1.8v1.8h-1.8zM235.6 701.4h1.8v1.8h-1.8zM261.4 747.2h1.8v1.8h-1.8zM273.2 699.9h1.8v1.8h-1.8zM263.0 668.4h1.8v1.8h-1.8zM250.4 727.6h1.8v1.8h-1.8zM287.0 753.9h1.8v1.8h-1.8zM286.2 736.6h1.8v1.8h-1.8zM283.3 694.4h1.8v1.8h-1.8zM281.6 797.7h1.8v1.8h-1.8zM310.5 702.6h1.8v1.8h-1.8zM278.1 750.9h1.8v1.8h-1.8zM292.3 731.3h1.8v1.8h-1.8zM317.1 698.7h1.8v1.8h-1.8zM315.6 741.5h1.8v1.8h-1.8zM294.7 672.7h1.8v1.8h-1.8zM310.4 745.5h1.8v1.8h-1.8zM317.2 691.3h1.8v1.8h-1.8zM303.2 759.9h1.8v1.8h-1.8zM311.8 709.3h1.8v1.8h-1.8zM290.2 799.1h1.8v1.8h-1.8zM310.6 664.1h1.8v1.8h-1.8zM313.2 732.2h1.8v1.8h-1.8zM308.8 697.0h1.8v1.8h-1.8zM282.0 670.4h1.8v1.8h-1.8zM291.7 769.4h1.8v1.8h-1.8zM313.2 702.5h1.8v1.8h-1.8zM300.9 782.3h1.8v1.8h-1.8zM299.6 760.4h1.8v1.8h-1.8zM318.2 793.2h1.8v1.8h-1.8zM278.2 700.9h1.8v1.8h-1.8zM308.9 743.5h1.8v1.8h-1.8zM314.7 698.0h1.8v1.8h-1.8zM315.8 765.6h1.8v1.8h-1.8zM305.6 761.6h1.8v1.8h-1.8zM307.0 750.4h1.8v1.8h-1.8zM301.6 695.5h1.8v1.8h-1.8zM303.8 800.3h1.8v1.8h-1.8zM283.7 680.7h1.8v1.8h-1.8zM316.7 682.8h1.8v1.8h-1.8zM278.8 770.7h1.8v1.8h-1.8zM304.3 774.1h1.8v1.8h-1.8zM280.4 720.2h1.8v1.8h-1.8zM312.0 734.5h1.8v1.8h-1.8zM314.1 741.0h1.8v1.8h-1.8zM286.3 669.5h1.8v1.8h-1.8zM313.3 771.7h1.8v1.8h-1.8zM304.2 678.5h1.8v1.8h-1.8zM281.7 704.6h1.8v1.8h-1.8zM295.4 702.7h1.8v1.8h-1.8zM289.5 720.0h1.8v1.8h-1.8zM291.1 766.9h1.8v1.8h-1.8zM303.6 725.5h1.8v1.8h-1.8zM296.0 743.3h1.8v1.8h-1.8zM300.2 793.5h1.8v1.8h-1.8zM281.4 677.6h1.8v1.8h-1.8zM286.1 739.1h1.8v1.8h-1.8zM298.3 783.9h1.8v1.8h-1.8zM285.4 717.2h1.8v1.8h-1.8zM312.6 803.8h1.8v1.8h-1.8zM289.5 770.4h1.8v1.8h-1.8zM298.6 759.7h1.8v1.8h-1.8zM281.0 778.0h1.8v1.8h-1.8zM304.0 723.7h1.8v1.8h-1.8zM294.2 737.7h1.8v1.8h-1.8zM278.7 705.0h1.8v1.8h-1.8zM357.6 704.9h1.8v1.8h-1.8zM356.9 717.4h1.8v1.8h-1.8zM342.1 758.3h1.8v1.8h-1.8zM334.4 678.9h1.8v1.8h-1.8zM355.2 760.4h1.8v1.8h-1.8zM326.8 774.5h1.8v1.8h-1.8zM344.1 721.9h1.8v1.8h-1.8zM357.0 676.7h1.8v1.8h-1.8zM332.4 783.2h1.8v1.8h-1.8zM326.2 695.6h1.8v1.8h-1.8zM333.4 680.1h1.8v1.8h-1.8zM333.5 802.7h1.8v1.8h-1.8zM350.4 795.2h1.8v1.8h-1.8zM324.0 807.1h1.8v1.8h-1.8zM353.2 714.7h1.8v1.8h-1.8zM328.0 673.8h1.8v1.8h-1.8zM328.4 662.7h1.8v1.8h-1.8zM336.5 744.7h1.8v1.8h-1.8zM346.3 672.8h1.8v1.8h-1.8zM345.1 763.6h1.8v1.8h-1.8zM357.9 734.1h1.8v1.8h-1.8zM351.2 684.3h1.8v1.8h-1.8zM350.1 761.3h1.8v1.8h-1.8zM355.6 745.1h1.8v1.8h-1.8zM338.8 748.7h1.8v1.8h-1.8zM323.8 776.8h1.8v1.8h-1.8zM349.7 688.0h1.8v1.8h-1.8zM337.5 748.1h1.8v1.8h-1.8zM336.9 794.8h1.8v1.8h-1.8zM327.4 775.0h1.8v1.8h-1.8zM336.1 801.8h1.8v1.8h-1.8zM321.3 684.2h1.8v1.8h-1.8zM352.6 696.1h1.8v1.8h-1.8zM343.9 760.4h1.8v1.8h-1.8zM341.3 778.1h1.8v1.8h-1.8zM341.7 795.9h1.8v1.8h-1.8zM328.5 716.6h1.8v1.8h-1.8zM351.8 798.1h1.8v1.8h-1.8zM334.7 696.7h1.8v1.8h-1.8zM336.5 717.8h1.8v1.8h-1.8zM337.4 707.5h1.8v1.8h-1.8zM330.9 768.3h1.8v1.8h-1.8zM359.3 680.1h1.8v1.8h-1.8zM353.4 681.0h1.8v1.8h-1.8zM325.1 767.3h1.8v1.8h-1.8zM339.5 687.8h1.8v1.8h-1.8zM360.3 743.1h1.8v1.8h-1.8zM354.2 706.3h1.8v1.8h-1.8zM342.8 778.3h1.8v1.8h-1.8zM334.6 703.9h1.8v1.8h-1.8zM330.4 684.9h1.8v1.8h-1.8zM319.8 702.8h1.8v1.8h-1.8zM330.0 729.2h1.8v1.8h-1.8zM337.7 753.7h1.8v1.8h-1.8zM335.0 724.0h1.8v1.8h-1.8zM354.6 718.4h1.8v1.8h-1.8zM396.8 633.4h1.8v1.8h-1.8zM362.3 714.0h1.8v1.8h-1.8zM366.1 678.8h1.8v1.8h-1.8zM394.5 655.1h1.8v1.8h-1.8zM399.9 712.2h1.8v1.8h-1.8zM387.4 754.1h1.8v1.8h-1.8zM395.0 700.2h1.8v1.8h-1.8zM384.1 701.5h1.8v1.8h-1.8zM399.0 671.5h1.8v1.8h-1.8zM371.7 715.8h1.8v1.8h-1.8zM364.3 666.2h1.8v1.8h-1.8zM382.5 718.0h1.8v1.8h-1.8zM398.1 760.6h1.8v1.8h-1.8zM381.5 738.0h1.8v1.8h-1.8zM397.2 695.7h1.8v1.8h-1.8zM402.2 728.2h1.8v1.8h-1.8zM388.6 727.2h1.8v1.8h-1.8zM390.5 733.9h1.8v1.8h-1.8zM383.3 773.4h1.8v1.8h-1.8zM363.2 739.8h1.8v1.8h-1.8zM376.1 702.5h1.8v1.8h-1.8zM383.9 683.6h1.8v1.8h-1.8zM379.6 763.9h1.8v1.8h-1.8zM374.1 708.6h1.8v1.8h-1.8zM373.2 789.2h1.8v1.8h-1.8zM389.4 682.6h1.8v1.8h-1.8zM374.4 736.4h1.8v1.8h-1.8zM394.8 743.2h1.8v1.8h-1.8zM399.1 638.4h1.8v1.8h-1.8zM374.4 667.8h1.8v1.8h-1.8zM400.6 731.8h1.8v1.8h-1.8zM395.0 726.4h1.8v1.8h-1.8zM388.2 725.2h1.8v1.8h-1.8zM390.5 735.6h1.8v1.8h-1.8zM381.1 656.8h1.8v1.8h-1.8zM363.4 764.0h1.8v1.8h-1.8zM377.3 741.2h1.8v1.8h-1.8zM372.7 704.4h1.8v1.8h-1.8zM375.2 737.1h1.8v1.8h-1.8zM401.1 717.7h1.8v1.8h-1.8zM363.5 767.8h1.8v1.8h-1.8zM386.0 668.7h1.8v1.8h-1.8zM378.1 781.6h1.8v1.8h-1.8zM403.1 693.5h1.8v1.8h-1.8zM366.1 675.5h1.8v1.8h-1.8zM368.2 642.7h1.8v1.8h-1.8zM390.6 782.1h1.8v1.8h-1.8zM365.5 654.7h1.8v1.8h-1.8zM392.1 745.6h1.8v1.8h-1.8zM369.7 759.7h1.8v1.8h-1.8zM391.8 695.0h1.8v1.8h-1.8zM388.3 704.1h1.8v1.8h-1.8zM443.2 773.3h1.8v1.8h-1.8zM434.1 630.3h1.8v1.8h-1.8zM431.3 657.8h1.8v1.8h-1.8zM434.6 758.5h1.8v1.8h-1.8zM424.4 684.4h1.8v1.8h-1.8zM428.1 731.1h1.8v1.8h-1.8zM410.0 706.2h1.8v1.8h-1.8zM430.4 686.8h1.8v1.8h-1.8zM437.0 730.2h1.8v1.8h-1.8zM416.2 777.4h1.8v1.8h-1.8zM433.5 699.2h1.8v1.8h-1.8zM445.1 696.3h1.8v1.8h-1.8zM421.9 709.4h1.8v1.8h-1.8zM429.2 711.1h1.8v1.8h-1.8zM404.0 694.8h1.8v1.8h-1.8zM428.6 698.9h1.8v1.8h-1.8zM439.0 736.7h1.8v1.8h-1.8zM415.4 742.7h1.8v1.8h-1.8zM442.4 640.6h1.8v1.8h-1.8zM427.2 700.6h1.8v1.8h-1.8zM443.1 719.4h1.8v1.8h-1.8zM432.4 659.5h1.8v1.8h-1.8zM414.6 724.4h1.8v1.8h-1.8zM407.6 706.3h1.8v1.8h-1.8zM428.3 735.2h1.8v1.8h-1.8zM424.0 657.3h1.8v1.8h-1.8zM412.0 736.1h1.8v1.8h-1.8zM419.2 690.0h1.8v1.8h-1.8zM425.7 635.2h1.8v1.8h-1.8zM445.9 643.6h1.8v1.8h-1.8zM430.5 685.4h1.8v1.8h-1.8zM418.4 631.9h1.8v1.8h-1.8zM405.3 733.5h1.8v1.8h-1.8zM427.8 746.7h1.8v1.8h-1.8zM421.8 749.3h1.8v1.8h-1.8zM444.5 633.4h1.8v1.8h-1.8zM412.4 641.8h1.8v1.8h-1.8zM406.0 763.1h1.8v1.8h-1.8zM423.2 702.6h1.8v1.8h-1.8zM429.1 646.5h1.8v1.8h-1.8zM444.3 712.9h1.8v1.8h-1.8zM430.9 708.8h1.8v1.8h-1.8zM422.8 775.5h1.8v1.8h-1.8zM445.7 633.5h1.8v1.8h-1.8zM414.7 766.7h1.8v1.8h-1.8zM442.0 690.7h1.8v1.8h-1.8zM433.8 777.4h1.8v1.8h-1.8zM406.2 745.3h1.8v1.8h-1.8zM443.4 672.8h1.8v1.8h-1.8zM428.8 660.9h1.8v1.8h-1.8zM456.8 699.5h1.8v1.8h-1.8zM453.1 648.9h1.8v1.8h-1.8zM474.5 732.3h1.8v1.8h-1.8zM454.2 766.7h1.8v1.8h-1.8zM455.3 759.1h1.8v1.8h-1.8zM451.9 642.0h1.8v1.8h-1.8zM485.1 703.9h1.8v1.8h-1.8zM460.3 709.8h1.8v1.8h-1.8zM452.0 635.9h1.8v1.8h-1.8zM476.0 645.6h1.8v1.8h-1.8zM482.7 684.8h1.8v1.8h-1.8zM452.6 753.6h1.8v1.8h-1.8zM460.1 700.6h1.8v1.8h-1.8zM459.4 709.0h1.8v1.8h-1.8zM448.4 693.8h1.8v1.8h-1.8zM466.1 664.5h1.8v1.8h-1.8zM454.5 776.2h1.8v1.8h-1.8zM488.0 650.7h1.8v1.8h-1.8zM483.7 732.3h1.8v1.8h-1.8zM458.4 688.9h1.8v1.8h-1.8zM460.4 627.1h1.8v1.8h-1.8zM481.0 650.9h1.8v1.8h-1.8zM464.3 685.4h1.8v1.8h-1.8zM451.8 743.3h1.8v1.8h-1.8zM476.0 635.7h1.8v1.8h-1.8zM449.7 702.1h1.8v1.8h-1.8zM457.5 719.1h1.8v1.8h-1.8zM475.8 683.1h1.8v1.8h-1.8zM448.8 689.0h1.8v1.8h-1.8zM476.4 746.2h1.8v1.8h-1.8zM460.1 728.8h1.8v1.8h-1.8zM446.7 729.2h1.8v1.8h-1.8zM457.2 752.0h1.8v1.8h-1.8zM461.5 682.4h1.8v1.8h-1.8zM471.0 703.1h1.8v1.8h-1.8zM464.8 644.1h1.8v1.8h-1.8zM476.1 713.4h1.8v1.8h-1.8zM475.9 737.3h1.8v1.8h-1.8zM448.6 736.6h1.8v1.8h-1.8zM467.6 706.3h1.8v1.8h-1.8zM446.9 658.2h1.8v1.8h-1.8zM450.3 750.5h1.8v1.8h-1.8zM447.3 732.9h1.8v1.8h-1.8zM454.2 717.4h1.8v1.8h-1.8zM470.3 730.8h1.8v1.8h-1.8zM450.3 684.8h1.8v1.8h-1.8zM493.3 696.4h1.8v1.8h-1.8zM499.9 680.7h1.8v1.8h-1.8zM493.9 751.1h1.8v1.8h-1.8zM494.3 733.6h1.8v1.8h-1.8zM495.0 720.8h1.8v1.8h-1.8zM505.8 687.9h1.8v1.8h-1.8zM527.7 657.6h1.8v1.8h-1.8zM502.2 767.9h1.8v1.8h-1.8zM522.0 741.4h1.8v1.8h-1.8zM490.4 766.5h1.8v1.8h-1.8zM527.4 677.9h1.8v1.8h-1.8zM514.7 696.9h1.8v1.8h-1.8zM491.0 697.5h1.8v1.8h-1.8zM489.0 768.5h1.8v1.8h-1.8zM520.8 724.8h1.8v1.8h-1.8zM525.3 665.5h1.8v1.8h-1.8zM499.3 660.7h1.8v1.8h-1.8zM510.9 683.2h1.8v1.8h-1.8zM510.0 761.8h1.8v1.8h-1.8zM500.2 717.4h1.8v1.8h-1.8zM493.2 765.7h1.8v1.8h-1.8zM509.7 688.1h1.8v1.8h-1.8zM510.6 635.7h1.8v1.8h-1.8zM493.6 682.0h1.8v1.8h-1.8zM500.2 632.2h1.8v1.8h-1.8zM511.1 706.6h1.8v1.8h-1.8zM515.5 724.2h1.8v1.8h-1.8zM507.5 710.8h1.8v1.8h-1.8zM507.8 654.3h1.8v1.8h-1.8zM497.4 677.7h1.8v1.8h-1.8zM512.8 670.1h1.8v1.8h-1.8zM524.4 699.0h1.8v1.8h-1.8zM508.8 767.7h1.8v1.8h-1.8zM500.5 636.0h1.8v1.8h-1.8zM524.8 623.4h1.8v1.8h-1.8zM504.4 730.0h1.8v1.8h-1.8zM492.7 766.3h1.8v1.8h-1.8zM519.2 666.5h1.8v1.8h-1.8zM502.9 712.2h1.8v1.8h-1.8zM523.9 710.1h1.8v1.8h-1.8zM561.5 699.6h1.8v1.8h-1.8zM560.0 681.4h1.8v1.8h-1.8zM530.4 695.7h1.8v1.8h-1.8zM570.7 667.1h1.8v1.8h-1.8zM563.2 679.7h1.8v1.8h-1.8zM549.2 717.7h1.8v1.8h-1.8zM542.5 695.0h1.8v1.8h-1.8zM546.4 728.4h1.8v1.8h-1.8zM566.0 672.0h1.8v1.8h-1.8zM538.0 633.5h1.8v1.8h-1.8zM554.4 623.1h1.8v1.8h-1.8zM568.9 726.5h1.8v1.8h-1.8zM565.5 654.0h1.8v1.8h-1.8zM568.5 616.2h1.8v1.8h-1.8zM554.0 744.6h1.8v1.8h-1.8zM562.8 751.3h1.8v1.8h-1.8zM552.0 711.0h1.8v1.8h-1.8zM546.6 699.6h1.8v1.8h-1.8zM545.0 701.0h1.8v1.8h-1.8zM534.4 673.3h1.8v1.8h-1.8zM553.8 738.7h1.8v1.8h-1.8zM570.8 670.1h1.8v1.8h-1.8zM556.5 673.4h1.8v1.8h-1.8zM564.5 654.6h1.8v1.8h-1.8zM571.4 652.4h1.8v1.8h-1.8zM567.9 723.9h1.8v1.8h-1.8zM571.9 649.2h1.8v1.8h-1.8zM542.4 687.4h1.8v1.8h-1.8zM538.1 707.7h1.8v1.8h-1.8zM555.6 754.4h1.8v1.8h-1.8zM557.0 669.6h1.8v1.8h-1.8zM563.4 707.5h1.8v1.8h-1.8zM530.4 741.6h1.8v1.8h-1.8zM554.9 638.9h1.8v1.8h-1.8zM593.3 644.4h1.8v1.8h-1.8zM599.5 744.9h1.8v1.8h-1.8zM596.5 624.1h1.8v1.8h-1.8zM578.9 623.3h1.8v1.8h-1.8zM579.5 722.3h1.8v1.8h-1.8zM598.1 612.4h1.8v1.8h-1.8zM604.7 705.6h1.8v1.8h-1.8zM587.2 645.0h1.8v1.8h-1.8zM576.5 673.3h1.8v1.8h-1.8zM591.2 615.4h1.8v1.8h-1.8zM609.8 739.1h1.8v1.8h-1.8zM590.8 642.3h1.8v1.8h-1.8zM574.2 689.8h1.8v1.8h-1.8zM610.1 668.8h1.8v1.8h-1.8zM612.7 737.5h1.8v1.8h-1.8zM582.5 707.6h1.8v1.8h-1.8zM581.6 729.3h1.8v1.8h-1.8zM592.7 636.5h1.8v1.8h-1.8zM587.4 742.2h1.8v1.8h-1.8zM584.5 624.4h1.8v1.8h-1.8zM594.8 663.2h1.8v1.8h-1.8zM575.1 722.9h1.8v1.8h-1.8zM587.1 634.6h1.8v1.8h-1.8zM584.2 613.4h1.8v1.8h-1.8zM642.4 623.1h1.8v1.8h-1.8zM644.1 637.7h1.8v1.8h-1.8zM649.6 658.8h1.8v1.8h-1.8zM649.6 634.8h1.8v1.8h-1.8zM644.8 726.9h1.8v1.8h-1.8zM623.2 655.0h1.8v1.8h-1.8zM633.5 698.2h1.8v1.8h-1.8zM625.4 669.8h1.8v1.8h-1.8zM624.8 633.6h1.8v1.8h-1.8zM651.1 667.3h1.8v1.8h-1.8zM637.2 705.5h1.8v1.8h-1.8zM630.6 680.5h1.8v1.8h-1.8zM627.5 616.0h1.8v1.8h-1.8zM621.9 672.7h1.8v1.8h-1.8zM619.0 655.4h1.8v1.8h-1.8zM635.5 612.2h1.8v1.8h-1.8zM627.5 621.4h1.8v1.8h-1.8zM644.6 654.9h1.8v1.8h-1.8zM652.7 712.4h1.8v1.8h-1.8zM620.0 609.1h1.8v1.8h-1.8zM664.0 620.7h1.8v1.8h-1.8zM666.1 604.8h1.8v1.8h-1.8zM667.1 599.6h1.8v1.8h-1.8zM656.9 631.4h1.8v1.8h-1.8zM656.9 657.1h1.8v1.8h-1.8zM668.8 650.5h1.8v1.8h-1.8zM675.1 627.8h1.8v1.8h-1.8zM680.7 635.4h1.8v1.8h-1.8zM686.7 632.6h1.8v1.8h-1.8zM682.7 662.5h1.8v1.8h-1.8zM681.9 685.5h1.8v1.8h-1.8zM670.4 698.3h1.8v1.8h-1.8zM683.9 701.5h1.8v1.8h-1.8zM683.9 707.4h1.8v1.8h-1.8zM672.0 714.6h1.8v1.8h-1.8zM656.9 714.6h1.8v1.8h-1.8zM699.1 724.1h1.8v1.8h-1.8zM703.0 725.3h1.8v1.8h-1.8zM718.9 719.4h1.8v1.8h-1.8zM706.6 632.6h1.8v1.8h-1.8zM712.6 611.5h1.8v1.8h-1.8zM714.1 623.5h1.8v1.8h-1.8zM721.3 592.0h1.8v1.8h-1.8zM730.1 602.8h1.8v1.8h-1.8zM734.9 640.1h1.8v1.8h-1.8zM727.3 668.4h1.8v1.8h-1.8zM727.3 693.5h1.8v1.8h-1.8zM724.5 703.4h1.8v1.8h-1.8zM726.9 701.1h1.8v1.8h-1.8zM753.1 590.8h1.8v1.8h-1.8zM754.4 605.6h1.8v1.8h-1.8zM751.6 618.7h1.8v1.8h-1.8zM754.0 621.9h1.8v1.8h-1.8zM764.7 613.9h1.8v1.8h-1.8zM767.9 628.2h1.8v1.8h-1.8zM772.3 635.4h1.8v1.8h-1.8zM753.1 644.5h1.8v1.8h-1.8zM760.3 652.1h1.8v1.8h-1.8zM775.5 656.5h1.8v1.8h-1.8zM760.3 677.6h1.8v1.8h-1.8zM767.9 685.1h1.8v1.8h-1.8zM773.9 687.5h1.8v1.8h-1.8zM751.6 689.5h1.8v1.8h-1.8zM758.3 701.5h1.8v1.8h-1.8zM764.7 701.5h1.8v1.8h-1.8zM777.8 704.2h1.8v1.8h-1.8zM781.0 698.3h1.8v1.8h-1.8zM789.0 698.3h1.8v1.8h-1.8zM781.0 679.2h1.8v1.8h-1.8zM787.4 674.4h1.8v1.8h-1.8zM799.3 672.8h1.8v1.8h-1.8zM787.4 635.4h1.8v1.8h-1.8zM806.5 636.6h1.8v1.8h-1.8zM818.8 625.8h1.8v1.8h-1.8zM812.9 602.8h1.8v1.8h-1.8zM815.6 575.3h1.8v1.8h-1.8zM820.4 584.1h1.8v1.8h-1.8zM826.0 591.6h1.8v1.8h-1.8zM836.7 642.6h1.8v1.8h-1.8zM826.0 666.8h1.8v1.8h-1.8zM838.3 666.8h1.8v1.8h-1.8zM838.3 699.9h1.8v1.8h-1.8zM861.0 693.5h1.8v1.8h-1.8zM862.2 645.7h1.8v1.8h-1.8zM883.3 666.8h1.8v1.8h-1.8zM899.6 569.3h1.8v1.8h-1.8zM851.5 627.8h1.8v1.8h-1.8zM862.2 621.9h1.8v1.8h-1.8z" fill="#e2e200"/><path d="M67.8 422.4 L71.2 426.4 L73.8 406.0 L75.6 400.8 L80.4 405.6 L86.0 395.6 L89.0 390.0 L92.0 419.0 L96.3 417.2 L101.5 406.0 L105.8 402.1 L110.5 405.0 L114.5 391.8 L118.0 413.7 L120.5 410.3 L126.6 391.8 L131.8 407.7 L136.1 416.3 L143.0 425.0 L148.2 429.8 L151.7 427.6 L158.6 427.6 L162.0 431.9 L164.7 438.8 L168.6 441.4 L175.9 426.7 L182.0 405.1 L184.9 423.3 L194.6 402.1 L198.4 426.4 L203.6 413.7 L207.0 421.5 L210.5 438.0 L219.2 413.7 L224.4 412.9 L228.7 428.4 L232.1 429.3 L236.1 436.2 L240.8 425.0 L244.3 428.4 L250.0 441.2 L254.3 435.5 L257.3 418.7 L261.8 432.0 L266.4 430.8 L270.8 431.1 L275.6 441.2 L278.5 430.3 L282.0 427.7 L287.2 414.2 L291.5 426.8 L296.4 426.0 L300.2 432.9 L308.0 454.5 L312.6 427.7 L317.5 448.1 L321.3 437.2 L325.3 453.6 L329.2 455.7 L333.9 444.6 L338.2 446.7 L342.9 468.3 L347.2 433.7 L350.3 435.5 L354.7 431.1 L359.0 465.4 L363.3 438.9 L367.6 442.4 L371.6 452.8 L376.3 438.4 L380.0 453.4 L386.9 474.1 L393.8 483.6 L400.8 479.3 L406.0 478.4 L413.7 459.4 L417.2 463.7 L422.4 456.0 L426.7 470.1 L431.0 457.7 L435.7 481.9 L440.2 480.5 L443.1 448.2 L446.6 456.0 L451.8 468.9 L456.6 495.7 L461.3 448.2 L463.9 457.7 L468.8 488.0 L473.4 475.0 L477.8 469.8 L482.1 468.1 L487.3 473.3 L494.2 498.3 L498.5 474.1 L503.2 497.1 L507.2 488.8 L515.0 484.5 L519.8 510.4 L524.5 480.2 L533.1 495.4 L536.2 462.0 L538.3 487.1 L540.9 513.0 L544.7 525.5 L553.9 519.1 L558.7 525.5 L561.7 501.8 L566.5 493.5 L571.2 501.1 L575.2 502.5 L579.9 540.9 L582.8 485.9 L585.6 497.7 L589.4 511.5 L594.6 516.4 L600.7 514.1 L605.3 536.1 L612.8 504.3 L617.4 530.2 L621.9 510.1 L628.9 539.2 L634.0 513.3 L638.7 534.4 L643.0 529.7 L647.4 529.7 L652.0 536.1 L655.2 528.0 L659.5 534.0 L663.8 529.7 L668.1 560.3 L672.8 534.4 L680.2 566.0 L684.6 538.9 L689.4 564.8 L693.7 540.1 L698.4 572.4 L701.5 547.9 L707.0 553.9 L714.8 571.2 L718.3 573.5 L722.6 568.6 L727.0 575.5 L731.3 590.2 L740.8 574.7 L744.7 585.8 L747.8 565.6 L751.7 571.8 L756.8 582.7 L765.7 590.2 L777.7 573.7 L782.0 606.8 L786.7 585.5 L791.1 599.0 L798.9 589.7 L804.6 598.3 L811.9 626.3 L815.5 606.1 L823.3 610.0 L828.4 618.5 L833.1 617.0 L837.8 631.0 L840.9 620.1 L845.6 632.2 L849.8 624.4 L854.9 633.8 L859.1 617.0 L866.9 636.9 L870.8 634.9 L875.5 647.3 L879.4 645.3 L884.0 636.4 L887.6 662.1 L896.5 643.7 L905.4 666.8 L909.0 663.4" stroke="#10a8e6" stroke-width="1.6" fill="none" stroke-linejoin="miter"/></svg>
<span class="ax" style="left:67.5px;top:237px;">MB/s</span>
<span class="ax" style="left:888px;top:237px;">ms</span>
<span class="ax" style="left:20px;width:40px;text-align:right;top:247.5px">200</span>
<span class="ax" style="left:917px;top:247.5px;">40</span>
<span class="ax" style="left:20px;width:40px;text-align:right;top:420.0px">150</span>
<span class="ax" style="left:917px;top:420.0px;">30</span>
<span class="ax" style="left:20px;width:40px;text-align:right;top:592.5px">100</span>
<span class="ax" style="left:917px;top:592.5px;">20</span>
<span class="ax" style="left:20px;width:40px;text-align:right;top:765.0px">50</span>
<span class="ax" style="left:917px;top:765.0px;">10</span>
<span class="ax" style="left:37.75px;width:60px;text-align:center;top:955px">0</span>
<span class="ax" style="left:121.75px;width:60px;text-align:center;top:955px">300</span>
<span class="ax" style="left:205.75px;width:60px;text-align:center;top:955px">600</span>
<span class="ax" style="left:289.75px;width:60px;text-align:center;top:955px">900</span>
<span class="ax" style="left:373.75px;width:60px;text-align:center;top:955px">1200</span>
<span class="ax" style="left:457.75px;width:60px;text-align:center;top:955px">1500</span>
<span class="ax" style="left:541.75px;width:60px;text-align:center;top:955px">1800</span>
<span class="ax" style="left:625.75px;width:60px;text-align:center;top:955px">2100</span>
<span class="ax" style="left:709.75px;width:60px;text-align:center;top:955px">2400</span>
<span class="ax" style="left:793.75px;width:60px;text-align:center;top:955px">2700</span>
<span class="ax" style="left:881px;top:955px;">3000gB</span>
<div class="btn" style="left:977px;top:223px;width:128px;height:42px;"></div>
<span class="lbl" style="left:1023px;top:233px;color:#000">开始</span>
<div class="sep" style="left:960px;top:285px;width:177px;height:2px;"></div>
<svg style="left:970px;top:301px" width="21" height="52" viewBox="0 0 21 52" overflow="visible">
<circle cx="10" cy="10" r="9.700" fill="#0f5fb4"/><circle cx="10" cy="10" r="3.700" fill="#fff"/>
<circle cx="10" cy="41.300" r="9.100" fill="#f4f4f4" stroke="#6a6a6a" stroke-width="1.100"/></svg>
<span class="lbl" style="left:994.5px;top:301px;">读取</span>
<span class="lbl" style="left:994.5px;top:332.5px;">写入</span>
<div class="sep" style="left:960px;top:361px;width:177px;height:2px;"></div>
<div class="cb off" style="left:971px;top:381px;width:19px;height:19px;"></div>
<span class="lbl" style="left:994.5px;top:380px;">短行程</span>
<div style="left:971px;top:415.5px;width:108px;height:38.5px;background:#fafafa;border:1px solid #ebebeb;border-radius:3px"></div>
<span class="lbl" style="left:977px;top:422px;color:#8a8a8a">40</span>
<div style="left:1052px;top:415px;width:26.5px;height:39px;background:#f3f3f3;border:1px solid #bcc0ca;border-top-width:2px;border-right-width:2px;border-left:none"></div>
<div style="left:1054px;top:419px;width:21px;height:16px;background:#f1f1f1;border:1px solid #e2e2e2"></div>
<div style="left:1054px;top:436px;width:21px;height:16px;background:#f1f1f1;border:1px solid #e2e2e2"></div>
<svg style="left:1059px;top:423px" width="10" height="24" viewBox="0 0 10 24"><path d="M1 6 L5 1.500 L9 6z M1 18 L5 22.500 L9 18z" fill="#6a6a6a"/></svg>
<span class="lbl" style="left:1100px;top:425px;">GB</span>
<div class="cb on" style="left:971px;top:477px;width:19px;height:19px;"><svg style="left:3px;top:4px" width="13" height="11" viewBox="0 0 13 11"><path d="M1.500 5.500 L5 9 L11.500 2" stroke="#fff" stroke-width="1.4" fill="none"/></svg></div>
<span class="lbl" style="left:994.5px;top:476.5px;">传输速率</span>
<div class="sep" style="left:960px;top:503px;width:177px;height:2px;"></div>
<span class="lbl" style="left:971px;top:510px;">最小</span>
<div class="bb" style="left:971px;top:538px;width:162px;height:29px;"><span style="color:#08b0f4">80.8 MB/s</span></div>
<span class="lbl" style="left:971px;top:576px;">最大</span>
<div class="bb" style="left:971px;top:602px;width:162px;height:29px;"><span style="color:#08b0f4">160.5 MB/s</span></div>
<span class="lbl" style="left:971px;top:634.5px;">平均</span>
<div class="bb" style="left:971px;top:662px;width:162px;height:29px;"><span style="color:#08b0f4">128.9 MB/s</span></div>
<div class="sep" style="left:960px;top:707px;width:177px;height:2px;"></div>
<div class="cb on" style="left:971px;top:722px;width:19px;height:19px;"><svg style="left:3px;top:4px" width="13" height="11" viewBox="0 0 13 11"><path d="M1.500 5.500 L5 9 L11.500 2" stroke="#fff" stroke-width="1.4" fill="none"/></svg></div>
<span class="lbl" style="left:994.5px;top:720px;">访问时间</span>
<div class="bb" style="left:971px;top:748px;width:162px;height:29px;"><span style="color:#f0f010">12.3 ms</span></div>
<div class="cb on" style="left:971px;top:789px;width:19px;height:19px;"><svg style="left:3px;top:4px" width="13" height="11" viewBox="0 0 13 11"><path d="M1.500 5.500 L5 9 L11.500 2" stroke="#fff" stroke-width="1.4" fill="none"/></svg></div>
<span class="lbl" style="left:994.5px;top:788px;">突发速率</span>
<div class="bb" style="left:971px;top:815px;width:162px;height:29px;"><span style="color:#fff">359.0 MB/s</span></div>
<span class="lbl" style="left:971px;top:850.5px;">CPU 使用率</span>
<div class="bb" style="left:971px;top:880px;width:162px;height:29px;"><span style="color:#fff">1.0%</span></div>
<span class="lbl" style="left:971px;top:938px;">通过次数</span>
<div style="left:971px;top:965px;width:136px;height:38px;background:#fff;border:1px solid #e2e2e2;border-bottom:2px solid #7a7a7a;border-radius:3px"></div>
<span class="lbl" style="left:977px;top:971px;color:#222">1</span>
<div style="left:1080px;top:964.5px;width:27px;height:38.5px;background:#eee;border:1px solid #b8bcc6;border-top-width:2px;border-right-width:2px"></div>
<div style="left:1082px;top:968px;width:22px;height:16px;background:#ececec;border:1px solid #b4b4b4"></div>
<div style="left:1082px;top:985px;width:22px;height:16px;background:#ececec;border:1px solid #b4b4b4"></div>
<svg style="left:1088px;top:973px" width="10" height="24" viewBox="0 0 10 24"><path d="M1 6 L5 1.500 L9 6z M1 18 L5 22.500 L9 18z" fill="#111"/></svg>
<div style="left:971px;top:1019px;width:94px;height:17px;background:#06ab2a;border:1px solid #c9d0c9;border-right-color:#a8a8a8"></div>
<span class="lbl" style="left:1073px;top:1020.5px;font-family:'Liberation Sans',sans-serif;letter-spacing:0.4px">1/1</span>
<div style="left:0px;top:895px;width:1px;height:140px;background:#c2c2c2"></div>
<div style="left:1px;top:895px;width:1px;height:140px;background:#f5f5f5"></div>
<div style="left:0px;top:71px;width:1px;height:824px;background:#f4f4f4"></div>
<svg style="left:0;top:1030px" width="12" height="12" viewBox="0 0 12 12"><path d="M0 2.500 V12 H5.800 Q0.800 10 0 2.500z" fill="#5c6262"/></svg><svg style="left:1150px;top:1036px" width="6" height="6" viewBox="0 0 6 6"><path d="M6 3.500 V6 H3.500 Q5.500 5.500 6 3.500z" fill="#5c6262"/></svg>
</body></html>
